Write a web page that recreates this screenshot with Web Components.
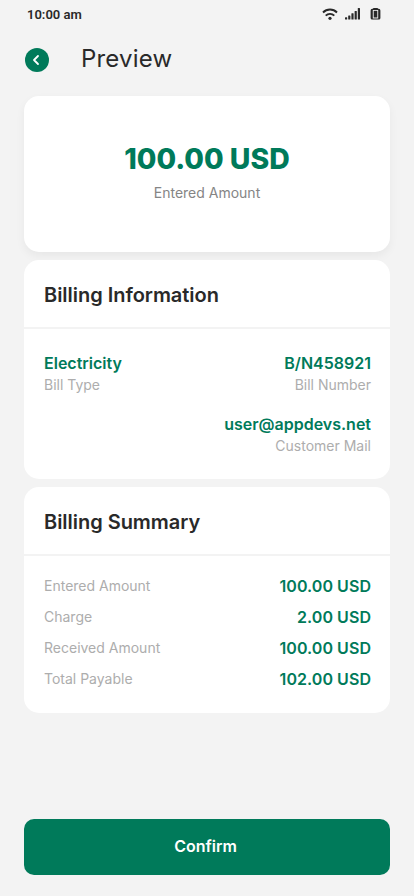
<!DOCTYPE html>
<html lang="en">
<head>
<meta charset="utf-8">
<meta name="viewport" content="width=device-width, initial-scale=1">
<title>Preview</title>
<style>
html, body { margin: 0; height: 100%; }
body {
  --primary: #007a5a; --ink: #292929; --muted: #adadad; --page: #f3f3f3;
  background: var(--page); color: var(--ink);
  font-family: Inter, "Liberation Sans", sans-serif;
}
</style>
</head>
<body>
<preview-screen></preview-screen>
<script>
const define = (name, html) => {
  const template = document.createElement('template');
  template.innerHTML = html;
  customElements.define(name, class extends HTMLElement {
    constructor() {
      super();
      this.attachShadow({ mode: 'open' }).append(template.content.cloneNode(true));
    }
  });
};

define('status-bar', `
<style>
:host { display: flex; align-items: center; justify-content: space-between; height: 28px; padding: 0 33px 0 27px; font: 600 13px/14px Roboto, sans-serif; }
.time { padding-top: 1px; }
.icons { display: flex; align-items: center; gap: 7px; }
svg { display: block; }
</style>
<span class="time">10:00 am</span>
<div class="icons">
  <svg width="16" height="14" viewBox="0 0 16 14" fill="none" stroke="#292929" stroke-width="1.9"><path d="M1 5.500a9.800 9.800 0 0 1 14 0M3.700 8.700a6 6 0 0 1 8.600 0"/><circle cx="8" cy="11.300" r="1.600" fill="#292929" stroke="none"/></svg>
  <svg width="16" height="14" viewBox="0 0 16 14" fill="#292929"><rect x="0" y="10.200" width="2.200" height="2.300" rx=".5"/><rect x="3.200" y="8.500" width="2.200" height="4" rx=".5"/><rect x="6.400" y="6.300" width="2.200" height="6.200" rx=".5"/><rect x="9.600" y="4" width="2.200" height="8.500" rx=".5"/><rect x="12.800" y="1" width="2.200" height="11.500" rx=".5"/></svg>
  <svg style="margin-left:2px" width="11" height="14" viewBox="0 0 11 14"><path fill="#292929" fill-rule="evenodd" d="M3.200 1h4.600v.8h1A1.600 1.600 0 0 1 10.400 3.400v7.600A1.600 1.600 0 0 1 8.800 12.600H2.200A1.600 1.600 0 0 1 .6 11V3.400A1.600 1.600 0 0 1 2.200 1.800h1zM2.800 2.900v8.500h5.400V2.900z"/><rect x="3.700" y="3.800" width="3.600" height="6.700" fill="#292929"/></svg>
</div>`);

define('app-bar', `
<style>
:host { display: flex; align-items: center; height: 64px; padding-left: 25px; gap: 32px; }
button { display: grid; place-items: center; width: 24px; height: 24px; border: 0; padding: 0; border-radius: 50%; background: var(--primary); }
h1 { margin: 0; font-size: 24px; line-height: 30px; font-weight: 400; padding-bottom: 3px; letter-spacing: .2px; }
svg { display: block; }
</style>
<button aria-label="Back"><svg width="24" height="24" viewBox="0 0 24 24" fill="none" stroke="#fff" stroke-width="1.8" stroke-linecap="round" stroke-linejoin="round"><path d="M13 8l-4 4 4 4"/></svg></button>
<h1><slot></slot></h1>`);

define('amount-card', `
<style>
:host { display: flex; flex-direction: column; align-items: center; justify-content: center; box-sizing: border-box; height: 156px; padding-bottom: 4px; background: #fff; border-radius: 15px; box-shadow: 0 4px 10px rgba(0,0,0,.05); }
.value { font-size: 28.400px; line-height: 34px; font-weight: 800; color: var(--primary); }
.label { margin-top: 8px; font-size: 14px; line-height: 18px; font-weight: 400; color: #858585; }
</style>
<div class="value"><slot name="value"></slot></div>
<div class="label"><slot></slot></div>`);

define('detail-card', `
<style>
:host { display: block; background: #fff; border-radius: 15px; }
h2 { margin: 0; padding: 0 20px; height: 67px; line-height: 70px; font-size: 20px; font-weight: 600; letter-spacing: -.03px; border-bottom: 2px solid var(--page); }
.body { display: flex; flex-direction: column; padding: 23px 19px 22px 20px; gap: 17px; }
:host([compact]) .body { padding: 19px 19px 23px 20px; gap: 9px; }
</style>
<h2><slot name="title"></slot></h2>
<div class="body"><slot></slot></div>`);

define('info-row', `
<style>:host { display: flex; justify-content: space-between; } :host([end]) { justify-content: flex-end; }</style><slot></slot>`);

define('info-item', `
<style>
:host { display: block; } :host([right]) { text-align: right; }
.value { font-size: 16px; line-height: 22px; font-weight: 600; color: var(--primary); }
.label { font-size: 14px; line-height: 22px; font-weight: 400; color: var(--muted); }
</style>
<div class="value"><slot name="value"></slot></div>
<div class="label"><slot></slot></div>`);

define('summary-row', `
<style>
:host { display: flex; justify-content: space-between; align-items: center; height: 22px; }
.value { font-size: 16px; line-height: 22px; font-weight: 600; letter-spacing: .06px; color: var(--primary); }
.label { font-size: 14px; line-height: 22px; font-weight: 400; color: var(--muted); }
</style>
<span class="label"><slot></slot></span><span class="value"><slot name="value"></slot></span>`);

define('primary-button', `
<style>
:host { display: block; }
button { display: block; width: 100%; height: 56px; border: 0; border-radius: 10px; padding: 0 3px 2px 0; background: var(--primary); color: #fff; font: 600 16px/20px Inter, sans-serif; }
</style>
<button><slot></slot></button>`);

define('preview-screen', `
<style>
:host { display: flex; flex-direction: column; height: 896px; box-sizing: border-box; padding-bottom: 21px; overflow: hidden; }
main { display: flex; flex-direction: column; flex: 1; gap: 8px; padding: 4px 24px 0; }
primary-button { margin-top: auto; }
</style>
<status-bar></status-bar>
<app-bar>Preview</app-bar>
<main>
  <amount-card><span slot="value">100.00 USD</span>Entered Amount</amount-card>
  <detail-card>
    <span slot="title">Billing Information</span>
    <info-row>
      <info-item><span slot="value">Electricity</span>Bill Type</info-item>
      <info-item right><span slot="value">B/N458921</span>Bill Number</info-item>
    </info-row>
    <info-row end><info-item right><span slot="value">user@appdevs.net</span>Customer Mail</info-item></info-row>
  </detail-card>
  <detail-card compact>
    <span slot="title">Billing Summary</span>
    <summary-row>Entered Amount<span slot="value">100.00 USD</span></summary-row>
    <summary-row>Charge<span slot="value">2.00 USD</span></summary-row>
    <summary-row>Received Amount<span slot="value">100.00 USD</span></summary-row>
    <summary-row>Total Payable<span slot="value">102.00 USD</span></summary-row>
  </detail-card>
  <primary-button>Confirm</primary-button>
</main>`);
</script>
</body>
</html>
